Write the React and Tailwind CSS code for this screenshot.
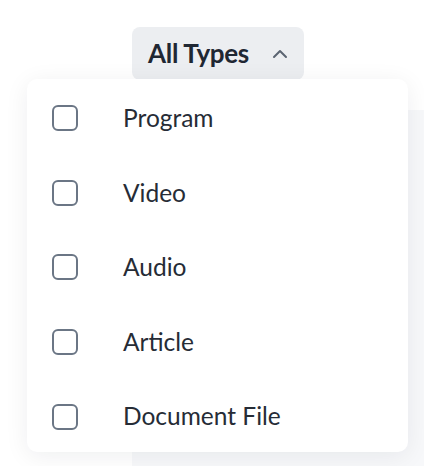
import { ChevronUp } from "lucide-react";

const TYPES = ["Program", "Video", "Audio", "Article", "Document File"];

export default function App() {
  return (
    <div className="relative w-[424px] h-[466px] bg-white overflow-hidden font-['Lato',sans-serif]">
      {/* top bar with filter button */}
      <div className="flex pt-[27px] pl-[132px]">
        <button className="flex items-center h-[53px] w-[172px] pl-[16px] rounded-[8px] bg-[#eceef1] text-[#1f2733]">
          <span className="text-[26px] font-bold tracking-[-0.3px]">All Types</span>
          <ChevronUp className="ml-[19px] w-[24px] h-[24px] text-[#5b6472]" strokeWidth={2} />
        </button>
      </div>

      {/* content panel behind the menu */}
      <div className="ml-[132px] mt-[30px] h-[400px] rounded-tl-[8px] bg-[#f7f8fa]" />

      {/* dropdown */}
      <div className="absolute left-[27px] top-[79px] w-[381px] h-[373px] rounded-[10px] bg-white shadow-[0_4px_24px_rgba(15,23,42,0.07)] flex flex-col pt-[2px]">
        {TYPES.map((t) => (
          <label key={t} className="flex shrink-0 items-center h-[74.6px] pl-[25px] cursor-pointer">
            <span className="w-[26px] h-[26px] rounded-[6px] border-2 border-[#6b7685] bg-white" />
            <span className="ml-[45px] text-[24.5px] text-[#262c36]">{t}</span>
          </label>
        ))}
      </div>
    </div>
  );
}
